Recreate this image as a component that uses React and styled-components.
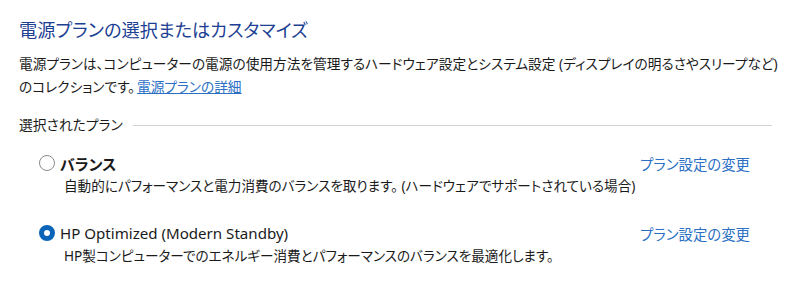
import React from 'react'
import styled, { createGlobalStyle } from 'styled-components'

const Global = createGlobalStyle`
    html, body {
        margin: 0;
        background: #fff;
    }
    body {
        font-family: "Noto Sans", "Noto Sans CJK JP", sans-serif;
        font-feature-settings: "palt";
        color: #1a1a1a;
    }
`;

const plans = [
    {
        name: 'バランス',
        bold: true,
        desc: '自動的にパフォーマンスと電力消費のバランスを取ります。 (ハードウェアでサポートされている場合)',
        checked: false,
    },
    {
        name: 'HP Optimized (Modern Standby)',
        bold: false,
        desc: 'HP製コンピューターでのエネルギー消費とパフォーマンスのバランスを最適化します。',
        checked: true,
    },
];

const App = () => {
    return (
        <Page>
            <Global />
            <Title>電源プランの選択またはカスタマイズ</Title>
            <Intro>
                電源プランは、コンピューターの電源の使用方法を管理するハードウェア設定とシステム設定 (ディスプレイの明るさやスリープなど)
                <br />
                のコレクションです。<Link href="#">電源プランの詳細</Link>
            </Intro>
            <Group>
                <GroupLabel>選択されたプラン</GroupLabel>
                <Rule />
            </Group>
            <Plans>
                {plans.map((p) => (
                    <Plan key={p.name}>
                        <PlanHead>
                            <Radio checked={p.checked} />
                            <PlanName bold={p.bold}>{p.name}</PlanName>
                            <Change href="#">プラン設定の変更</Change>
                        </PlanHead>
                        <PlanDesc>{p.desc}</PlanDesc>
                    </Plan>
                ))}
            </Plans>
        </Page>
    )
}

export default App

const Page = styled.div`
    width: 800px;
    height: 297px;
    box-sizing: border-box;
    padding: 16px 28px 0 19px;
`;

const Title = styled.h1`
    margin: 0;
    font-size: 18.2px;
    font-weight: 400;
    line-height: 28px;
    color: #1d3f94;
`;

const Intro = styled.p`
    margin: 8px 0 0;
    font-size: 13.7px;
    line-height: 23px;
    white-space: nowrap;
`;

const Link = styled.a`
    margin-left: 2px;
    color: #2a6fc4;
    text-decoration: underline;
`;

const Group = styled.div`
    display: flex;
    align-items: center;
    gap: 10px;
    margin-top: 16px;
`;

const GroupLabel = styled.span`
    font-size: 13.8px;
    line-height: 22px;
`;

const Rule = styled.div`
    flex: 1;
    height: 1px;
    background: #d4d4d4;
`;

const Plans = styled.div`
    display: flex;
    flex-direction: column;
    gap: 26px;
    margin-top: 16px;
    padding: 0 22px 0 20px;
`;

const Plan = styled.div`
    display: flex;
    flex-direction: column;
`;

const PlanHead = styled.div`
    display: flex;
    align-items: center;
    height: 22px;
`;

const Radio = styled.span`
    width: 16px;
    height: 16px;
    box-sizing: border-box;
    border-radius: 50%;
    flex-shrink: 0;
    background: #fff;
    border: ${(p) => (p.checked ? '5px solid #0a64b8' : '1px solid #8a8a8a')};
    margin-right: 5px;
`;

const PlanName = styled.span`
    font-size: 15.1px;
    font-weight: ${(p) => (p.bold ? 700 : 400)};
`;

const Change = styled.a`
    margin-left: auto;
    font-size: 14.4px;
    color: #2a6fc4;
    text-decoration: none;
`;

const PlanDesc = styled.div`
    margin-top: 2px;
    padding-left: 25px;
    font-size: 13.6px;
    line-height: 20px;
`;
